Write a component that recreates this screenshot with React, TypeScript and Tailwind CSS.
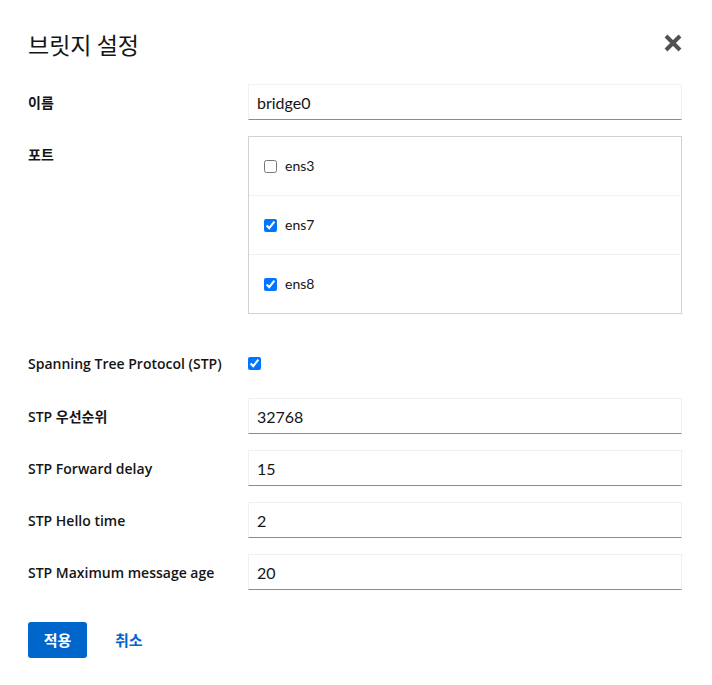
import React from "react";

const font = { fontFamily: '"Lato", "Noto Sans CJK KR", sans-serif' };
const labelFont = { fontFamily: '"Open Sans", "Noto Sans CJK KR", sans-serif' };

const ports = [
  { name: "ens3", checked: false },
  { name: "ens7", checked: true },
  { name: "ens8", checked: true },
];

const stpFields = [
  { label: "STP 우선순위", value: "32768" },
  { label: "STP Forward delay", value: "15" },
  { label: "STP Hello time", value: "2" },
  { label: "STP Maximum message age", value: "20" },
];

const TextInput: React.FC<{ value: string }> = ({ value }) => (
  <input
    type="text"
    defaultValue={value}
    className="h-9 w-full border border-[#f0f0f0] border-b-[#8a8d90] bg-white px-2 text-base text-[#151515] outline-none"
  />
);

const Label: React.FC<{ children: React.ReactNode }> = ({ children }) => (
  <div className="flex h-9 items-center text-[14px] font-semibold text-[#151515]" style={labelFont}>
    {children}
  </div>
);

export default function App() {
  return (
    <div className="min-h-[685px] w-[712px] bg-white pl-7 pr-[30px] pt-7" style={font}>
      {/* Header */}
      <div className="flex items-start justify-between">
        <h1
          className="text-[23px] leading-8 text-[#151515]"
          style={{ fontFamily: '"Noto Sans CJK KR", sans-serif' }}
        >
          브릿지 설정
        </h1>
        <button className="-mr-[1px] mt-[5px] text-[#4f5255]" aria-label="닫기">
          <svg width="20" height="20" viewBox="0 0 20 20">
            <path d="M3 3 L17 17 M17 3 L3 17" stroke="currentColor" strokeWidth="4" />
          </svg>
        </button>
      </div>

      {/* Form */}
      <div className="mt-6 grid grid-cols-[220px_1fr] gap-y-4">
        <Label>이름</Label>
        <TextInput value="bridge0" />

        <Label>포트</Label>
        <div className="border border-[#d2d2d2]">
          {ports.map((p, i) => (
            <label
              key={p.name}
              className={
                "flex items-center gap-2 px-[15px] text-sm text-[#151515] " +
                (i > 0 ? "h-[59px] border-t border-[#f0f0f0]" : "h-[58px]")
              }
            >
              <input type="checkbox" defaultChecked={p.checked} className="m-0 h-[13px] w-[13px]" />
              {p.name}
            </label>
          ))}
        </div>

        <div className="mt-[15px]">
          <Label>Spanning Tree Protocol (STP)</Label>
        </div>
        <div className="mt-[15px] flex h-9 items-center">
          <input type="checkbox" defaultChecked className="m-0 h-[13px] w-[13px]" />
        </div>

        {stpFields.map((f, i) => (
          <React.Fragment key={f.label}>
            <div className={i === 0 ? "mt-[1px]" : ""}>
              <Label>{f.label}</Label>
            </div>
            <div className={i === 0 ? "mt-[1px]" : ""}>
              <TextInput value={f.value} />
            </div>
          </React.Fragment>
        ))}
      </div>

      {/* Footer */}
      <div className="mt-8 flex items-center gap-7">
        <button className="h-9 w-[59px] rounded-[3px] bg-[#0066cc] text-[15px] font-bold text-white">
          적용
        </button>
        <button className="text-[15px] font-bold text-[#0066cc]">취소</button>
      </div>
    </div>
  );
}
